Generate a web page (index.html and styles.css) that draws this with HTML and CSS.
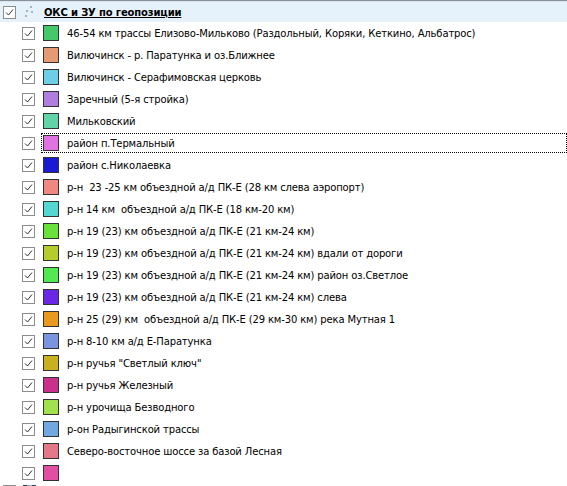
FILE: index.html
```html
<!DOCTYPE html>
<html>
<head>
<meta charset="utf-8">
<link rel="stylesheet" href="styles.css">
</head>
<body>
<div class="tree">
  <div class="row head">
    <span class="cb"><svg viewBox="0 0 13 13" width="13" height="13"><rect x="0.5" y="0.5" width="12" height="12" fill="#fff" stroke="#8c8c8c"/><path d="M3 6.5 L5.5 9 L10 3.5" fill="none" stroke="#333" stroke-width="1"/></svg></span>
    <span class="dots"><svg viewBox="0 0 14 14" width="14" height="14"><circle cx="9" cy="2" r="1" fill="#8aa0b8"/><circle cx="5" cy="6" r="1" fill="#8aa0b8"/><circle cx="10" cy="7" r="1" fill="#8aa0b8"/><circle cx="4" cy="11" r="1" fill="#8aa0b8"/></svg></span>
    <span class="label bold">ОКС и ЗУ по геопозиции</span>
  </div>
  <ul class="items">
    <li class="row"><span class="cb"><svg viewBox="0 0 13 13" width="13" height="13"><rect x="0.5" y="0.5" width="12" height="12" fill="#fff" stroke="#8c8c8c"/><path d="M3 6.5 L5.5 9 L10 3.5" fill="none" stroke="#333" stroke-width="1"/></svg></span><span class="sw" style="background:#45c86c"></span><span class="label">46-54 км трассы Елизово-Мильково (Раздольный, Коряки, Кеткино, Альбатрос)</span></li>
    <li class="row"><span class="cb"><svg viewBox="0 0 13 13" width="13" height="13"><rect x="0.5" y="0.5" width="12" height="12" fill="#fff" stroke="#8c8c8c"/><path d="M3 6.5 L5.5 9 L10 3.5" fill="none" stroke="#333" stroke-width="1"/></svg></span><span class="sw" style="background:#e69a74"></span><span class="label">Вилючинск - р. Паратунка и оз.Ближнее</span></li>
    <li class="row"><span class="cb"><svg viewBox="0 0 13 13" width="13" height="13"><rect x="0.5" y="0.5" width="12" height="12" fill="#fff" stroke="#8c8c8c"/><path d="M3 6.5 L5.5 9 L10 3.5" fill="none" stroke="#333" stroke-width="1"/></svg></span><span class="sw" style="background:#6ccfe6"></span><span class="label">Вилючинск - Серафимовская церковь</span></li>
    <li class="row"><span class="cb"><svg viewBox="0 0 13 13" width="13" height="13"><rect x="0.5" y="0.5" width="12" height="12" fill="#fff" stroke="#8c8c8c"/><path d="M3 6.5 L5.5 9 L10 3.5" fill="none" stroke="#333" stroke-width="1"/></svg></span><span class="sw" style="background:#b07edf"></span><span class="label">Заречный (5-я стройка)</span></li>
    <li class="row"><span class="cb"><svg viewBox="0 0 13 13" width="13" height="13"><rect x="0.5" y="0.5" width="12" height="12" fill="#fff" stroke="#8c8c8c"/><path d="M3 6.5 L5.5 9 L10 3.5" fill="none" stroke="#333" stroke-width="1"/></svg></span><span class="sw" style="background:#62d3a6"></span><span class="label">Мильковский</span></li>
    <li class="row focus"><span class="cb"><svg viewBox="0 0 13 13" width="13" height="13"><rect x="0.5" y="0.5" width="12" height="12" fill="#fff" stroke="#8c8c8c"/><path d="M3 6.5 L5.5 9 L10 3.5" fill="none" stroke="#333" stroke-width="1"/></svg></span><span class="sw" style="background:#e072e2"></span><span class="label">район п.Термальный</span></li>
    <li class="row"><span class="cb"><svg viewBox="0 0 13 13" width="13" height="13"><rect x="0.5" y="0.5" width="12" height="12" fill="#fff" stroke="#8c8c8c"/><path d="M3 6.5 L5.5 9 L10 3.5" fill="none" stroke="#333" stroke-width="1"/></svg></span><span class="sw" style="background:#1a1ad2"></span><span class="label">район с.Николаевка</span></li>
    <li class="row"><span class="cb"><svg viewBox="0 0 13 13" width="13" height="13"><rect x="0.5" y="0.5" width="12" height="12" fill="#fff" stroke="#8c8c8c"/><path d="M3 6.5 L5.5 9 L10 3.5" fill="none" stroke="#333" stroke-width="1"/></svg></span><span class="sw" style="background:#ef8880"></span><span class="label">р-н&nbsp; 23 -25 км объездной а/д ПК-Е (28 км слева аэропорт)</span></li>
    <li class="row"><span class="cb"><svg viewBox="0 0 13 13" width="13" height="13"><rect x="0.5" y="0.5" width="12" height="12" fill="#fff" stroke="#8c8c8c"/><path d="M3 6.5 L5.5 9 L10 3.5" fill="none" stroke="#333" stroke-width="1"/></svg></span><span class="sw" style="background:#52d8d0"></span><span class="label">р-н 14 км&nbsp; объездной а/д ПК-Е (18 км-20 км)</span></li>
    <li class="row"><span class="cb"><svg viewBox="0 0 13 13" width="13" height="13"><rect x="0.5" y="0.5" width="12" height="12" fill="#fff" stroke="#8c8c8c"/><path d="M3 6.5 L5.5 9 L10 3.5" fill="none" stroke="#333" stroke-width="1"/></svg></span><span class="sw" style="background:#68e23a"></span><span class="label">р-н 19 (23) км объездной а/д ПК-Е (21 км-24 км)</span></li>
    <li class="row"><span class="cb"><svg viewBox="0 0 13 13" width="13" height="13"><rect x="0.5" y="0.5" width="12" height="12" fill="#fff" stroke="#8c8c8c"/><path d="M3 6.5 L5.5 9 L10 3.5" fill="none" stroke="#333" stroke-width="1"/></svg></span><span class="sw" style="background:#b6cc2a"></span><span class="label">р-н 19 (23) км объездной а/д ПК-Е (21 км-24 км) вдали от дороги</span></li>
    <li class="row"><span class="cb"><svg viewBox="0 0 13 13" width="13" height="13"><rect x="0.5" y="0.5" width="12" height="12" fill="#fff" stroke="#8c8c8c"/><path d="M3 6.5 L5.5 9 L10 3.5" fill="none" stroke="#333" stroke-width="1"/></svg></span><span class="sw" style="background:#52e852"></span><span class="label">р-н 19 (23) км объездной а/д ПК-Е (21 км-24 км) район оз.Светлое</span></li>
    <li class="row"><span class="cb"><svg viewBox="0 0 13 13" width="13" height="13"><rect x="0.5" y="0.5" width="12" height="12" fill="#fff" stroke="#8c8c8c"/><path d="M3 6.5 L5.5 9 L10 3.5" fill="none" stroke="#333" stroke-width="1"/></svg></span><span class="sw" style="background:#6a28e6"></span><span class="label">р-н 19 (23) км объездной а/д ПК-Е (21 км-24 км) слева</span></li>
    <li class="row"><span class="cb"><svg viewBox="0 0 13 13" width="13" height="13"><rect x="0.5" y="0.5" width="12" height="12" fill="#fff" stroke="#8c8c8c"/><path d="M3 6.5 L5.5 9 L10 3.5" fill="none" stroke="#333" stroke-width="1"/></svg></span><span class="sw" style="background:#e99a1e"></span><span class="label">р-н 25 (29) км&nbsp; объездной а/д ПК-Е (29 км-30 км) река Мутная 1</span></li>
    <li class="row"><span class="cb"><svg viewBox="0 0 13 13" width="13" height="13"><rect x="0.5" y="0.5" width="12" height="12" fill="#fff" stroke="#8c8c8c"/><path d="M3 6.5 L5.5 9 L10 3.5" fill="none" stroke="#333" stroke-width="1"/></svg></span><span class="sw" style="background:#7b94e0"></span><span class="label">р-н 8-10 км а/д Е-Паратунка</span></li>
    <li class="row"><span class="cb"><svg viewBox="0 0 13 13" width="13" height="13"><rect x="0.5" y="0.5" width="12" height="12" fill="#fff" stroke="#8c8c8c"/><path d="M3 6.5 L5.5 9 L10 3.5" fill="none" stroke="#333" stroke-width="1"/></svg></span><span class="sw" style="background:#c9b01e"></span><span class="label">р-н ручья "Светлый ключ"</span></li>
    <li class="row"><span class="cb"><svg viewBox="0 0 13 13" width="13" height="13"><rect x="0.5" y="0.5" width="12" height="12" fill="#fff" stroke="#8c8c8c"/><path d="M3 6.5 L5.5 9 L10 3.5" fill="none" stroke="#333" stroke-width="1"/></svg></span><span class="sw" style="background:#c9318c"></span><span class="label">р-н ручья Железный</span></li>
    <li class="row"><span class="cb"><svg viewBox="0 0 13 13" width="13" height="13"><rect x="0.5" y="0.5" width="12" height="12" fill="#fff" stroke="#8c8c8c"/><path d="M3 6.5 L5.5 9 L10 3.5" fill="none" stroke="#333" stroke-width="1"/></svg></span><span class="sw" style="background:#a2e04e"></span><span class="label">р-н урочища Безводного</span></li>
    <li class="row"><span class="cb"><svg viewBox="0 0 13 13" width="13" height="13"><rect x="0.5" y="0.5" width="12" height="12" fill="#fff" stroke="#8c8c8c"/><path d="M3 6.5 L5.5 9 L10 3.5" fill="none" stroke="#333" stroke-width="1"/></svg></span><span class="sw" style="background:#72a8e0"></span><span class="label">р-он Радыгинской трассы</span></li>
    <li class="row"><span class="cb"><svg viewBox="0 0 13 13" width="13" height="13"><rect x="0.5" y="0.5" width="12" height="12" fill="#fff" stroke="#8c8c8c"/><path d="M3 6.5 L5.5 9 L10 3.5" fill="none" stroke="#333" stroke-width="1"/></svg></span><span class="sw" style="background:#e27888"></span><span class="label">Северо-восточное шоссе за базой Лесная</span></li>
    <li class="row"><span class="cb"><svg viewBox="0 0 13 13" width="13" height="13"><rect x="0.5" y="0.5" width="12" height="12" fill="#fff" stroke="#8c8c8c"/><path d="M3 6.5 L5.5 9 L10 3.5" fill="none" stroke="#333" stroke-width="1"/></svg></span><span class="sw" style="background:#e14ea2"></span><span class="label"></span></li>
  </ul>
  <div class="row next">
    <span class="cb"><svg viewBox="0 0 13 13" width="13" height="13"><rect x="0.5" y="0.5" width="12" height="12" fill="#fff" stroke="#8c8c8c"/></svg></span>
    <span class="dbicon"></span>
  </div>
</div>
</body>
</html>
```
FILE: styles.css
```css
html, body {
  margin: 0;
  padding: 0;
  background: #fff;
  overflow: hidden;
}
body {
  width: 567px;
  height: 486px;
  font-family: "DejaVu Sans", Verdana, sans-serif;
  font-size: 10px;
  letter-spacing: -0.14px;
  color: #000;
}
.tree {
  border-top: 1px solid #8a8e96;
}
.items {
  list-style: none;
  margin: 0;
  padding: 0;
}
.row {
  display: flex;
  align-items: center;
  height: 22px;
  box-sizing: border-box;
}
.head {
  height: 21px;
  background: #e5f2fc;
  padding-left: 3px;
  border-top: 1px solid #d9e6f2;
}
.cb {
  display: flex;
  width: 13px;
  height: 13px;
}
.dots {
  display: flex;
  width: 14px;
  height: 14px;
  margin-left: 6px;
  margin-right: 8px;
}
.items .row {
  padding-left: 22px;
}
.sw {
  width: 14px;
  height: 14px;
  border: 1px solid #333;
  margin-left: 8px;
  margin-right: 8px;
  flex: none;
}
.label {
  white-space: nowrap;
}
.bold {
  font-weight: bold;
  text-decoration: underline;
}
.focus {
  position: relative;
}
.focus::after {
  content: "";
  position: absolute;
  left: 41px;
  right: 0;
  top: 1px;
  bottom: 1px;
  border: 1px dotted #000;
}
.next {
  padding-left: 3px;
  align-items: flex-start;
  padding-top: 1px;
}
.dbicon {
  width: 13px;
  height: 6px;
  margin-left: 7px;
  background: linear-gradient(to right, #2f3b52 0 4px, #9aa6b8 4px 9px, #2f3b52 9px);
}
```
